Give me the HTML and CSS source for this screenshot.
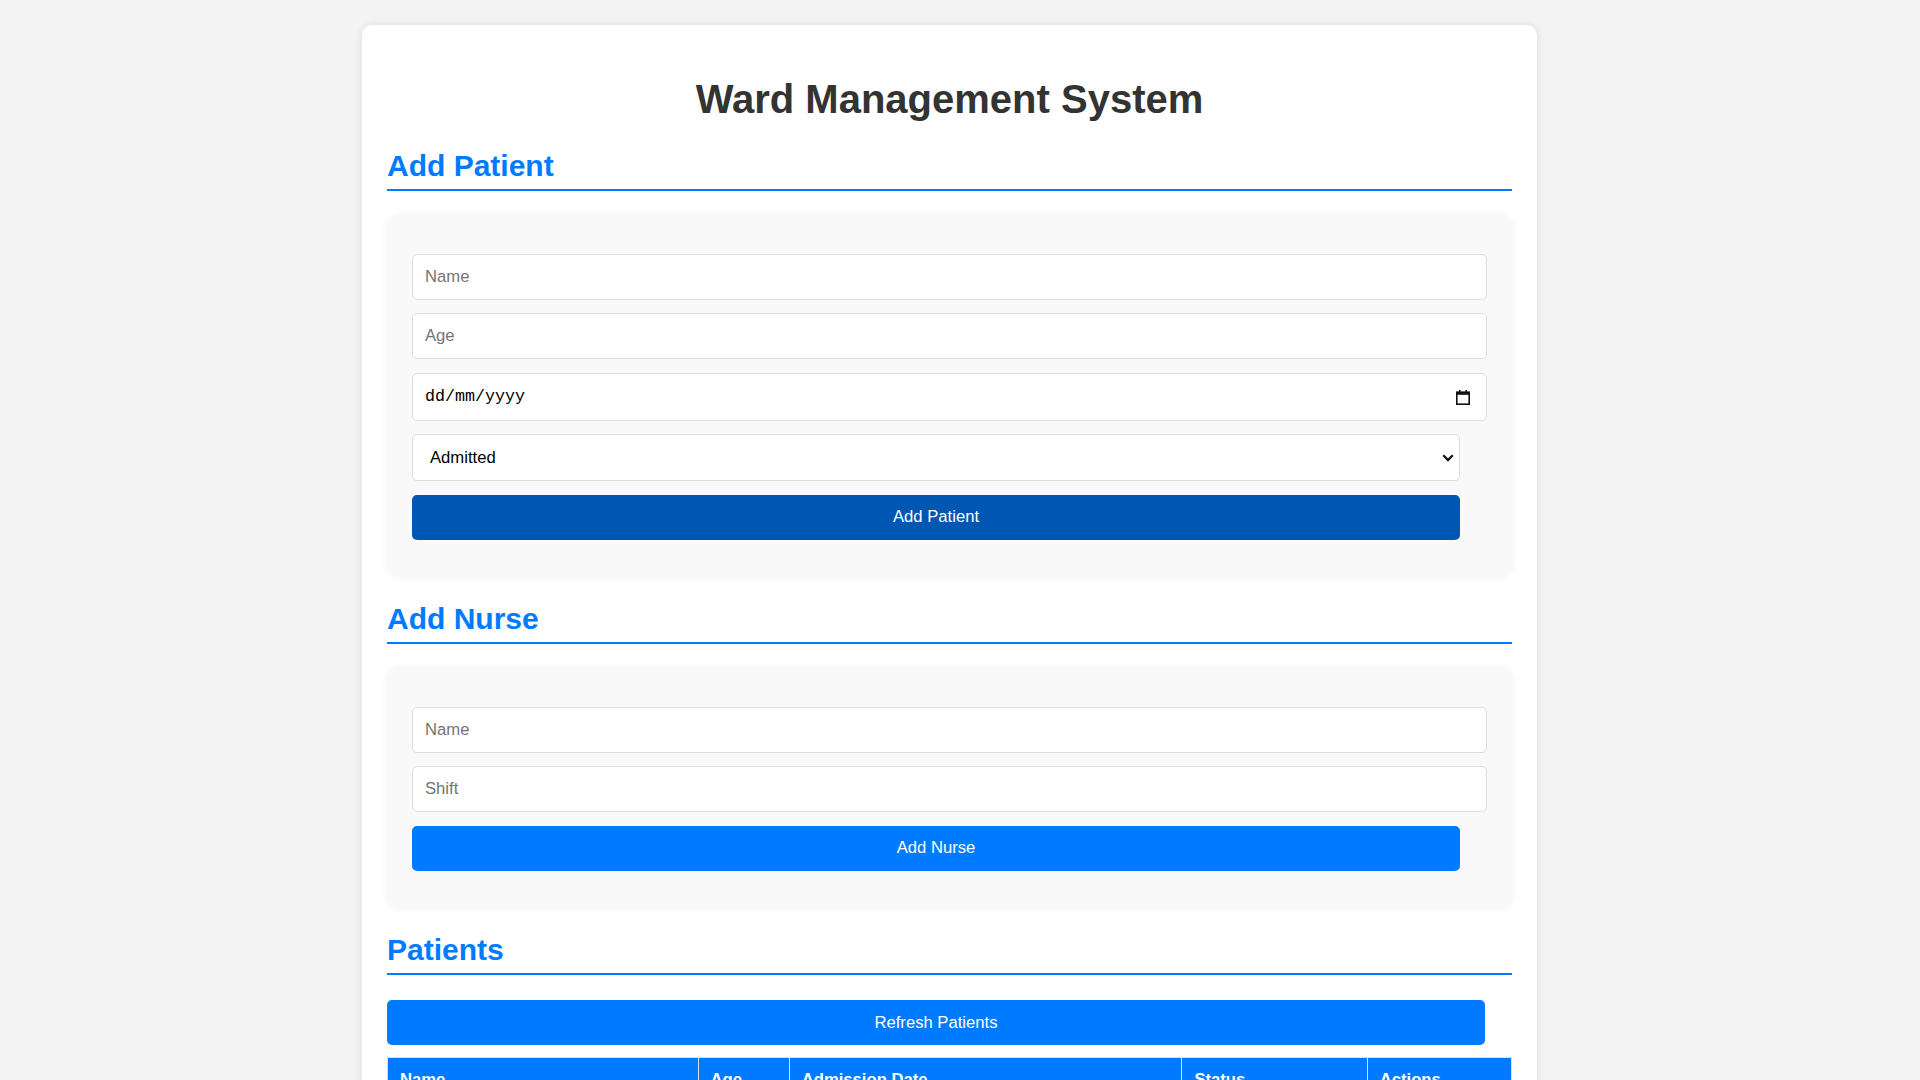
FILE: index.html
```html
<!DOCTYPE html>
<html lang="en-GB">
<head>
<meta charset="utf-8">
<title>Ward Management System</title>
<link rel="stylesheet" href="styles.css">
</head>
<body>
<div class="container">
  <h1 class="title">Ward Management System</h1>

  <h2 class="section-title">Add Patient</h2>
  <form class="form-box" onsubmit="return false;">
    <input class="field" type="text" placeholder="Name">
    <input class="field" type="number" placeholder="Age">
    <div class="date-wrap">
      <input class="field date" type="text" placeholder="dd/mm/yyyy" aria-label="Admission date">
      <svg class="cal-icon" width="14" height="15" viewBox="0 0 14 15" aria-hidden="true">
        <rect x="3" y="0" width="1.6" height="2.5" fill="#111"/>
        <rect x="9.4" y="0" width="1.6" height="2.5" fill="#111"/>
        <rect x="0.8" y="2.2" width="12.4" height="12" fill="none" stroke="#111" stroke-width="1.6"/>
        <rect x="0.8" y="2.2" width="12.4" height="2.6" fill="#111"/>
      </svg>
    </div>
    <div class="select-wrap">
      <select class="choice" aria-label="Status">
        <option>Admitted</option>
        <option>Discharged</option>
      </select>
      <svg class="chevron" width="12" height="8" viewBox="0 0 12 8" aria-hidden="true">
        <polyline points="1.3,1.3 6,6 10.7,1.3" fill="none" stroke="#111" stroke-width="2.3"/>
      </svg>
    </div>
    <button class="btn btn-hover" type="button">Add Patient</button>
  </form>

  <h2 class="section-title">Add Nurse</h2>
  <form class="form-box" onsubmit="return false;">
    <input class="field" type="text" placeholder="Name">
    <input class="field" type="text" placeholder="Shift">
    <button class="btn" type="button">Add Nurse</button>
  </form>

  <h2 class="section-title">Patients</h2>
  <button class="btn refresh" type="button">Refresh Patients</button>
  <table class="data-table">
    <thead>
      <tr>
        <th class="col-name">Name</th>
        <th class="col-age">Age</th>
        <th class="col-date">Admission Date</th>
        <th class="col-status">Status</th>
        <th class="col-actions">Actions</th>
      </tr>
    </thead>
    <tbody></tbody>
  </table>
</div>
</body>
</html>
```
FILE: styles.css
```css
html, body {
  margin: 0;
  padding: 0;
}

body {
  background: #f4f4f4;
  font-family: "Liberation Sans", Arial, sans-serif;
  color: #333;
  padding-right: 21px;
}

.container {
  box-sizing: border-box;
  width: 1175px;
  margin: 25px auto;
  padding: 25px;
  background: #fff;
  border-radius: 10px;
  box-shadow: 0 0 10px rgba(0, 0, 0, 0.1);
}

.title {
  font-size: 40px;
  font-weight: bold;
  text-align: center;
  color: #333;
  margin: 26.8px 0 27.3px;
}

.section-title {
  font-size: 30px;
  font-weight: bold;
  color: #007bff;
  margin: 25px 0;
  padding-bottom: 6px;
  border-bottom: 2px solid #007bff;
}

.form-box {
  display: flex;
  flex-direction: column;
  align-items: flex-start;
  gap: 13.5px;
  background: #f9f9f9;
  padding: 37.5px 25px 36.5px;
  border-radius: 10px;
  box-shadow: 0 0 8px rgba(0, 0, 0, 0.06);
  margin-bottom: 26px;
}

.field {
  box-sizing: border-box;
  width: 100%;
  height: 46px;
  padding: 0 12px;
  border: 1px solid #ddd;
  border-radius: 5px;
  font-family: "Liberation Sans", Arial, sans-serif;
  font-size: 16.67px;
  color: #000;
  background: #fff;
  outline: none;
}

.date-wrap {
  position: relative;
  width: 100%;
}

.field.date {
  display: block;
  height: 48px;
  padding-right: 40px;
  font-family: "Liberation Mono", "DejaVu Sans Mono", monospace;
  font-size: 16.67px;
}

.field.date::placeholder {
  color: #000;
  opacity: 1;
}

.cal-icon {
  position: absolute;
  right: 17px;
  top: 17px;
}

.select-wrap {
  position: relative;
  width: calc(100% - 27px);
}

.choice {
  display: block;
  box-sizing: border-box;
  width: 100%;
  height: 47px;
  padding: 0 30px 0 17px;
  border: 1px solid #ddd;
  border-radius: 5px;
  font-family: "Liberation Sans", Arial, sans-serif;
  font-size: 16.67px;
  color: #000;
  background: #fff;
  -webkit-appearance: none;
  appearance: none;
  outline: none;
}

.chevron {
  position: absolute;
  right: 6px;
  top: 20px;
  pointer-events: none;
}

.btn {
  box-sizing: border-box;
  width: calc(100% - 27px);
  height: 45px;
  padding: 0 12px;
  border: none;
  border-radius: 5px;
  background: #007bff;
  color: #fff;
  font-family: "Liberation Sans", Arial, sans-serif;
  font-size: 16.67px;
  cursor: pointer;
}

.btn-hover {
  background: #0056b3;
}

.refresh {
  display: block;
  margin-bottom: 12px;
}

.data-table {
  width: 100%;
  border-collapse: collapse;
}

.data-table th {
  background: #007bff;
  color: #fff;
  text-align: left;
  font-size: 16.67px;
  font-weight: bold;
  padding: 12px;
  border: 1px solid #ddd;
}

.col-name { width: 285px; }
.col-age { width: 66px; }
.col-date { width: 367px; }
.col-status { width: 160px; }
.col-actions { width: 119px; }
```
